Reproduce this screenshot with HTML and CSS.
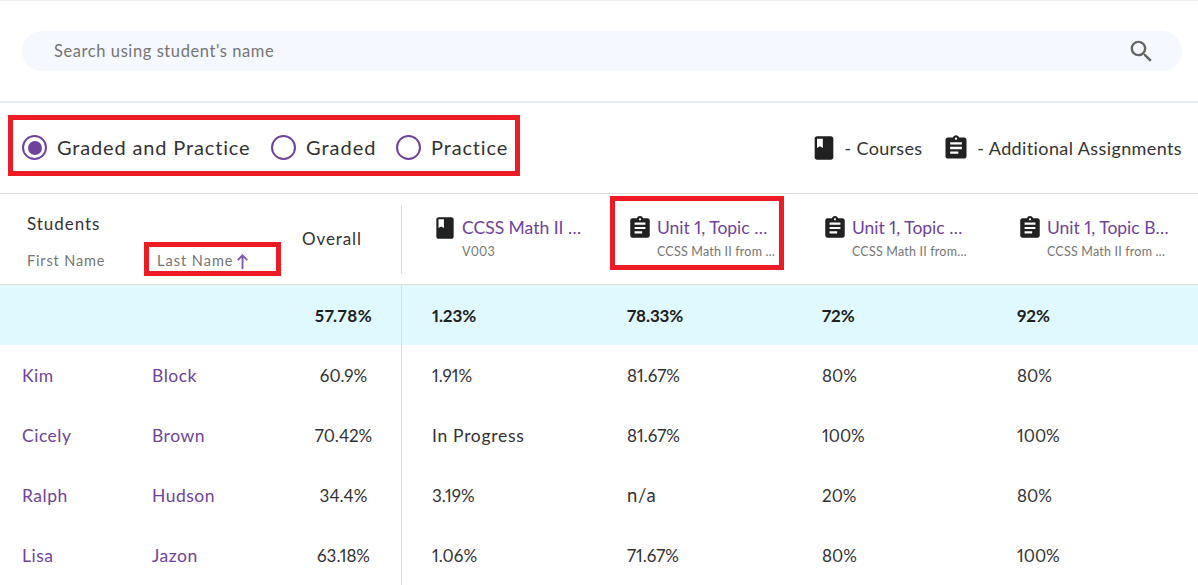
FILE: index.html
```html
<!DOCTYPE html>
<html lang="en">
<head>
<meta charset="utf-8">
<title>Students</title>
<link rel="stylesheet" href="styles.css">
</head>
<body>
<svg class="defs" width="0" height="0" aria-hidden="true">
  <symbol id="book" viewBox="0 0 24 24"><path d="M18 2H6c-1.100 0-2 .900-2 2v16c0 1.100.900 2 2 2h12c1.100 0 2-.900 2-2V4c0-1.100-.900-2-2-2zM6 4h5v8l-2.500-1.500L6 12V4z"/></symbol>
  <symbol id="clip" viewBox="0 0 24 24"><path d="M19 3h-4.180C14.400 1.840 13.300 1 12 1c-1.300 0-2.400.840-2.820 2H5c-1.100 0-2 .900-2 2v14c0 1.100.900 2 2 2h14c1.100 0 2-.900 2-2V5c0-1.100-.900-2-2-2zm-7 0c.550 0 1 .450 1 1s-.450 1-1 1-1-.450-1-1 .450-1 1-1zm2 14H7v-2h7v2zm3-4H7v-2h10v2zm0-4H7V7h10v2z"/></symbol>
</svg>
<main class="page">
  <section class="search-wrap">
    <div class="search">
      <span class="search-text">Search using student's name</span>
      <svg class="search-icon" viewBox="0 0 24 24"><path d="M15.500 14h-.790l-.280-.270A6.470 6.470 0 0 0 16 9.500 6.500 6.500 0 1 0 9.500 16c1.610 0 3.090-.590 4.230-1.570l.270.280v.790l5 4.990L20.490 19l-4.990-5zm-6 0C7.010 14 5 11.990 5 9.500S7.010 5 9.500 5 14 7.010 14 9.500 11.990 14 9.500 14z"/></svg>
    </div>
  </section>

  <section class="filters">
    <div class="radios">
      <label class="radio"><span class="dot on"></span><span class="r1">Graded and Practice</span></label>
      <label class="radio"><span class="dot"></span><span class="r2">Graded</span></label>
      <label class="radio"><span class="dot"></span><span class="r3">Practice</span></label>
    </div>
    <div class="legend">
      <svg class="ico-lg"><use href="#book"/></svg><span class="leg1">- Courses</span>
      <svg class="ico-lg"><use href="#clip"/></svg><span class="leg2">- Additional Assignments</span>
    </div>
  </section>

  <section class="table">
    <div class="row head">
      <div class="students">
        <div class="students-title">Students</div>
        <div class="sort-row">
          <span class="sort first">First Name</span>
          <span class="sort last">Last Name <svg class="arrow" viewBox="0 0 11 15"><path d="M5.500 15V1.500M.8 6.200 5.500 1.300l4.700 4.900" fill="none" stroke="#8459b0" stroke-width="1.900"/></svg></span>
          <span class="box box-last"></span>
        </div>
      </div>
      <div class="overall-head"><span>Overall</span></div>
      <div class="col-head">
        <svg class="ico"><use href="#book"/></svg>
        <div class="col-text"><div class="col-title">CCSS Math II …</div><div class="col-sub">V003</div></div>
      </div>
      <div class="col-head">
        <svg class="ico"><use href="#clip"/></svg>
        <div class="col-text"><div class="col-title">Unit 1, Topic …</div><div class="col-sub">CCSS Math II from …</div></div>
        <span class="box box-unit"></span>
      </div>
      <div class="col-head">
        <svg class="ico"><use href="#clip"/></svg>
        <div class="col-text"><div class="col-title">Unit 1, Topic …</div><div class="col-sub">CCSS Math II from…</div></div>
      </div>
      <div class="col-head">
        <svg class="ico"><use href="#clip"/></svg>
        <div class="col-text"><div class="col-title">Unit 1, Topic B…</div><div class="col-sub">CCSS Math II from …</div></div>
      </div>
    </div>

    <div class="row data summary">
      <div class="cell"></div><div class="cell"></div>
      <div class="cell overall">57.78%</div>
      <div class="cell">1.23%</div><div class="cell">78.33%</div><div class="cell">72%</div><div class="cell">92%</div>
    </div>
    <div class="row data">
      <div class="cell name">Kim</div><div class="cell name">Block</div>
      <div class="cell overall">60.9%</div>
      <div class="cell">1.91%</div><div class="cell">81.67%</div><div class="cell">80%</div><div class="cell">80%</div>
    </div>
    <div class="row data">
      <div class="cell name">Cicely</div><div class="cell name">Brown</div>
      <div class="cell overall">70.42%</div>
      <div class="cell word">In Progress</div><div class="cell">81.67%</div><div class="cell">100%</div><div class="cell">100%</div>
    </div>
    <div class="row data">
      <div class="cell name">Ralph</div><div class="cell name">Hudson</div>
      <div class="cell overall">34.4%</div>
      <div class="cell">3.19%</div><div class="cell word wide">n/a</div><div class="cell">20%</div><div class="cell">80%</div>
    </div>
    <div class="row data">
      <div class="cell name">Lisa</div><div class="cell name">Jazon</div>
      <div class="cell overall">63.18%</div>
      <div class="cell">1.06%</div><div class="cell">71.67%</div><div class="cell">80%</div><div class="cell">100%</div>
    </div>
  </section>
</main>
</body>
</html>
```
FILE: styles.css
```css
* { box-sizing: border-box; }
html, body { margin: 0; height: 585px; overflow: hidden; background: #fff; }
body { font-family: "Lato", "Open Sans", sans-serif; color: #212121; font-variant-numeric: proportional-nums; }
.defs { position: absolute; }
.page { width: 1198px; }

.search-wrap { height: 103px; padding: 30px 16px 0 22px; border-top: 1px solid #e9eef2; border-bottom: 2px solid #e9eef2; }
.search { height: 40px; border-radius: 20px; background: #f5f8ff; display: flex; align-items: center; justify-content: space-between; padding: 0 26px 0 32px; }
.search-text { font-size: 16.500px; letter-spacing: .58px; color: #757575; }
.search-icon { width: 29px; height: 29px; fill: #666; }

.filters { height: 91px; display: flex; align-items: center; justify-content: space-between; padding: 0 16px 5px 8px; border-bottom: 1px solid #dedede; }
.radios { width: 512px; height: 61px; border: 5px solid #ed1c24; padding: 4px 0 0 9px; display: flex; align-items: center; font-size: 20px; color: #333; }
.radio { display: flex; align-items: center; gap: 10px; margin-right: 20px; }
.dot { width: 25px; height: 25px; border: 2px solid #6f439b; border-radius: 50%; flex: none; display: flex; align-items: center; justify-content: center; }
.dot.on::after { content: ""; width: 14px; height: 14px; border-radius: 50%; background: #6f439b; }
.r1, .r2, .r3 { margin-bottom: 2px; }
.r1 { letter-spacing: .85px; width: 194px; white-space: nowrap; }
.r2 { letter-spacing: 1px; width: 70px; }
.r3 { letter-spacing: .85px; width: 76px; }

.legend { display: flex; align-items: center; font-size: 18px; color: #333; margin-top: 5px; }
.ico-lg { width: 28px; height: 28px; fill: #212121; flex: none; display: block; }
.ico { width: 26px; height: 26px; fill: #212121; flex: none; display: block; }
.leg1 { margin-left: 7px; margin-right: 20px; letter-spacing: .3px; white-space: nowrap; }
.leg2 { margin-left: 7px; letter-spacing: .39px; white-space: nowrap; }

.row { display: grid; grid-template-columns: 130px 130px 142px repeat(4, 195px); }
.head { grid-template-columns: 260px 120px repeat(4, 195px); margin-left: 22px; height: 90px; width: 1176px; }

.students { padding: 18px 0 0 5px; }
.students-title { font-size: 17px; line-height: 24px; letter-spacing: .95px; color: #333; }
.sort-row { display: flex; margin-top: 16px; position: relative; font-size: 14.500px; line-height: 18px; color: #757575; letter-spacing: .85px; }
.sort.first { width: 130px; }
.sort.last { display: inline-flex; align-items: center; gap: 4px; white-space: nowrap; letter-spacing: 1px; }
.arrow { width: 11px; height: 15px; }
.box { position: absolute; border: 5px solid #ed1c24; pointer-events: none; }
.box-last { left: 117px; top: -10px; width: 137px; height: 34px; }

.overall-head { display: flex; align-items: center; padding: 0 0 2px 20px; font-size: 17px; letter-spacing: .9px; color: #333; position: relative; }
.overall-head::after { content: ""; position: absolute; right: 0; top: 11px; bottom: 10px; width: 1px; background: #dcdcdc; }

.col-head { display: flex; gap: 4px; padding: 21px 0 0 30px; position: relative; }
.col-text { min-width: 0; }
.col-title { font-size: 17.500px; line-height: 26px; color: #6f439b; white-space: nowrap; }
.col-sub { font-size: 12.500px; line-height: 16px; margin-top: 3px; color: #757575; letter-spacing: .2px; white-space: nowrap; }
.box-unit { left: 13px; top: 2px; width: 174px; height: 74px; }

.data { height: 60px; font-size: 17px; color: #333; }
.summary { height: 61px; background: #e0f9ff; border-top: 1px solid #dedede; font-weight: 700; color: #212121; letter-spacing: -.1px; }
.cell { display: flex; align-items: center; padding-left: 30px; white-space: nowrap; }
.cell:first-child { padding-left: 22px; }
.cell:nth-child(2) { padding-left: 22px; }
.name { color: #6f439b; font-size: 17.500px; letter-spacing: .5px; }
.word { font-size: 17.500px; letter-spacing: .7px; }
.wide { font-size: 18.500px; letter-spacing: .8px; }
.overall { justify-content: center; padding: 0 0 0 26px; border-right: 1px solid #dedede; }
.summary .overall { letter-spacing: .5px; }
```
